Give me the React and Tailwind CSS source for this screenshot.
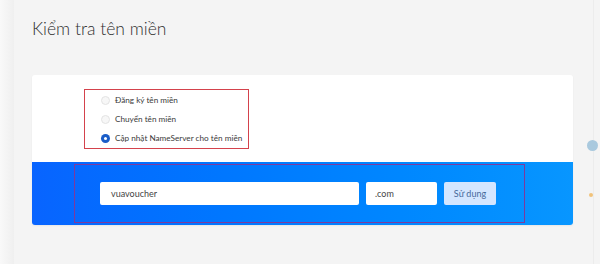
import { useState } from 'react';

const options = [
  'Đăng ký tên miền',
  'Chuyển tên miền',
  'Cập nhật NameServer cho tên miền',
];

function Radio({ checked }) {
  if (checked) {
    return (
      <span className="w-[9px] h-[9px] shrink-0 rounded-full bg-[#1a5dc8] flex items-center justify-center">
        <span className="w-[3px] h-[3px] rounded-full bg-white" />
      </span>
    );
  }
  return <span className="w-[9px] h-[9px] shrink-0 rounded-full border border-[#e3e3e3] bg-[#f7f7f7]" />;
}

export default function App() {
  const [selected] = useState(2);

  return (
    <div className="relative w-[600px] h-[264px] overflow-hidden bg-[#f4f4f4] font-['Lato','Liberation_Sans',sans-serif]">
      {/* left edge shade */}
      <div className="absolute left-0 top-0 h-full w-[14px] bg-gradient-to-r from-[#f9f9f9] to-[#efefef]" />

      {/* right side decoration */}
      <div className="absolute left-[593px] top-0 h-full w-px bg-[#ececec]" />
      <div className="absolute left-[587px] top-[140px] w-[11px] h-[11px] rounded-full bg-[#a9c9de]" />
      <div className="absolute left-[589px] top-[193px] w-[4px] h-[4px] rounded-full bg-[#f0c27a]" />

      <div className="relative pl-[32px] pt-[16px]">
        <h1 className="text-[17.5px] leading-[26px] text-[#2e2e2e] font-light">Kiểm tra tên miền</h1>

        <div className="mt-[33px] w-[541px] rounded-[3px] shadow-[0_1px_2px_rgba(0,0,0,0.06)] overflow-hidden">
          <div className="bg-white h-[87px] pt-[14px] pl-[52px]">
            <div className="w-[165px] h-[60px] border-[1.5px] border-[#d4424c] flex flex-col justify-center gap-[4px] pl-[16px]">
              {options.map((label, i) => (
                <label key={label} className="flex items-center gap-[5px] h-[15px]">
                  <Radio checked={i === selected} />
                  <span className="text-[8.2px] text-[#3a3a3a] whitespace-nowrap">{label}</span>
                </label>
              ))}
            </div>
          </div>

          <div className="h-[63px] bg-gradient-to-r from-[#0864ff] to-[#0896ff] pt-[2px] pl-[42px]">
            <div className="w-[451px] h-[59px] border-[1.5px] border-[#7d3a9e] flex items-center gap-[7px] pl-[25px]">
              <div className="w-[259px] h-[23px] bg-white rounded-[2px] flex items-center pl-[11px] text-[9px] text-[#444]">
                vuavoucher
              </div>
              <div className="w-[71px] h-[23px] bg-white rounded-[2px] flex items-center pl-[9px] text-[9px] text-[#444]">
                .com
              </div>
              <button className="w-[52px] h-[23px] bg-[#d4e6ff] rounded-[2px] text-[9px] text-[#46689a]">
                Sử dụng
              </button>
            </div>
          </div>
        </div>
      </div>
    </div>
  );
}
